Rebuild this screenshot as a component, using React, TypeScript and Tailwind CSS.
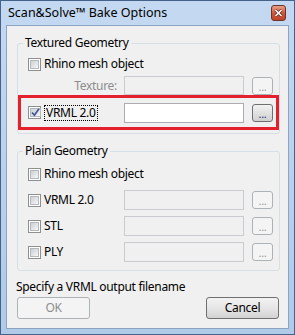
import React from "react";

const CheckBox = ({ checked = false }: { checked?: boolean }) => (
  <span className="flex h-[13px] w-[13px] shrink-0 border border-[#8e8f8f] bg-white p-px">
    <span className="flex flex-1 items-center justify-center border border-[#b4b8bd] bg-gradient-to-br from-[#cbcfd5] to-[#f7f7f7]">
      {checked && (
        <svg width="9" height="9" viewBox="0 0 9 9" className="-mt-px">
          <path d="M1 4.5 L3.4 7.2 L8 0.8" fill="none" stroke="#3d5591" strokeWidth="1.7" />
        </svg>
      )}
    </span>
  </span>
);

const Dots = ({ enabled = false }: { enabled?: boolean }) => (
  <button
    type="button"
    className={
      enabled
        ? "ml-[8px] flex h-[18px] w-[21px] shrink-0 items-end justify-center rounded-[3px] border border-[#707070] bg-gradient-to-b from-[#f2f2f2] to-[#d0d0d0] pb-[3px] text-[11px] leading-[8px] text-[#1e2b6e]"
        : "ml-[8px] flex h-[18px] w-[21px] shrink-0 items-end justify-center rounded-[3px] border border-[#adb2b5] bg-[#f4f4f4] pb-[3px] text-[11px] leading-[8px] text-[#9a9a9a]"
    }
  >
    ...
  </button>
);

const Field = ({ white = false }: { white?: boolean }) => (
  <div
    className={
      white
        ? "h-[20px] w-[120px] shrink-0 border border-[#abadb3] bg-white"
        : "h-[20px] w-[120px] shrink-0 border border-[#c9cbce] bg-[#f0f0f0]"
    }
  />
);

const FileRow = ({ label, className }: { label: string; className: string }) => (
  <div className={`flex h-[20px] items-center pl-[10px] ${className}`}>
    <label className="flex w-[96px] items-center gap-[3px]">
      <CheckBox />
      <span>{label}</span>
    </label>
    <Field />
    <Dots />
  </div>
);

const Group = ({
  title,
  className,
  children,
}: {
  title: string;
  className: string;
  children: React.ReactNode;
}) => (
  <fieldset
    className={`ml-[10px] w-[263px] rounded-[3px] border border-[#d5dfe5] ${className}`}
  >
    <legend className="ml-[5px] px-[2px] text-[12px] leading-[14px]">{title}</legend>
    {children}
  </fieldset>
);

export default function App() {
  return (
    <div className="flex h-[335px] w-[295px] flex-col border border-[#43638c] bg-gradient-to-b from-[#c4d9f1] to-[#b0cae8] px-[5px] pb-[5px] font-['Noto_Sans',sans-serif] text-[12px] text-black">
      <div className="flex h-[24px] items-center justify-between pl-[2px]">
        <span className="text-[12.5px] leading-[14px]">Scan&amp;Solve™ Bake Options</span>
        <span className="mr-[3px] flex h-[16px] w-[15px] items-center justify-center rounded-[3px] border border-[#6b3426] bg-gradient-to-b from-[#e8a08b] via-[#d2563a] to-[#c0422a]">
          <svg width="9" height="8" viewBox="0 0 9 8">
            <path d="M1.5 1 L7.5 7 M7.5 1 L1.5 7" stroke="#4a2218" strokeWidth="2.8" />
            <path d="M1.5 1 L7.5 7 M7.5 1 L1.5 7" stroke="white" strokeWidth="1.6" />
          </svg>
        </span>
      </div>

      <div className="flex flex-1 flex-col border border-[#8aa4c2] bg-[#f0f0f0] tracking-[-0.3px]">
        <Group title="Textured Geometry" className="mt-[10px] h-[98px]">
          <label className="mt-[6px] flex h-[16px] items-center gap-[3px] pl-[10px]">
            <CheckBox />
            <span>Rhino mesh object</span>
          </label>
          <div className="mt-[4px] flex h-[19px] items-center pl-[10px]">
            <span className="w-[96px] pr-[7px] text-right text-[#8d8d8d]">Texture:</span>
            <div className="h-[19px] w-[120px] shrink-0 border border-[#c9cbce] bg-[#f0f0f0]" />
            <Dots />
          </div>
          <div className="flex h-[35px] items-center border-[3px] border-[#e3202b] pl-[7px]">
            <label className="flex w-[96px] items-center gap-[3px]">
              <CheckBox checked />
              <span className="border border-dotted border-black px-px leading-[14px]">VRML 2.0</span>
            </label>
            <Field white />
            <Dots enabled />
          </div>
        </Group>

        <Group title="Plain Geometry" className="mt-[10px] h-[127px]">
          <label className="mt-[8px] flex h-[16px] items-center gap-[3px] pl-[10px]">
            <CheckBox />
            <span>Rhino mesh object</span>
          </label>
          <FileRow label="VRML 2.0" className="mt-[8px]" />
          <FileRow label="STL" className="mt-[6px]" />
          <FileRow label="PLY" className="mt-[6px]" />
        </Group>

        <p className="mt-[8px] h-[16px] pl-[9px] leading-[16px]">Specify a VRML output filename</p>

        <div className="mt-[2px] flex justify-between pl-[10px] pr-[9px]">
          <button
            type="button"
            className="h-[22px] w-[73px] rounded-[3px] border border-[#adb2b5] bg-[#f4f4f4] text-[12px] text-[#8d8d8d]"
          >
            OK
          </button>
          <button
            type="button"
            className="h-[22px] w-[73px] rounded-[3px] border border-[#707070] bg-gradient-to-b from-[#f2f2f2] via-[#e6e6e6] to-[#d2d2d2] text-[12px]"
          >
            Cancel
          </button>
        </div>
      </div>
    </div>
  );
}
